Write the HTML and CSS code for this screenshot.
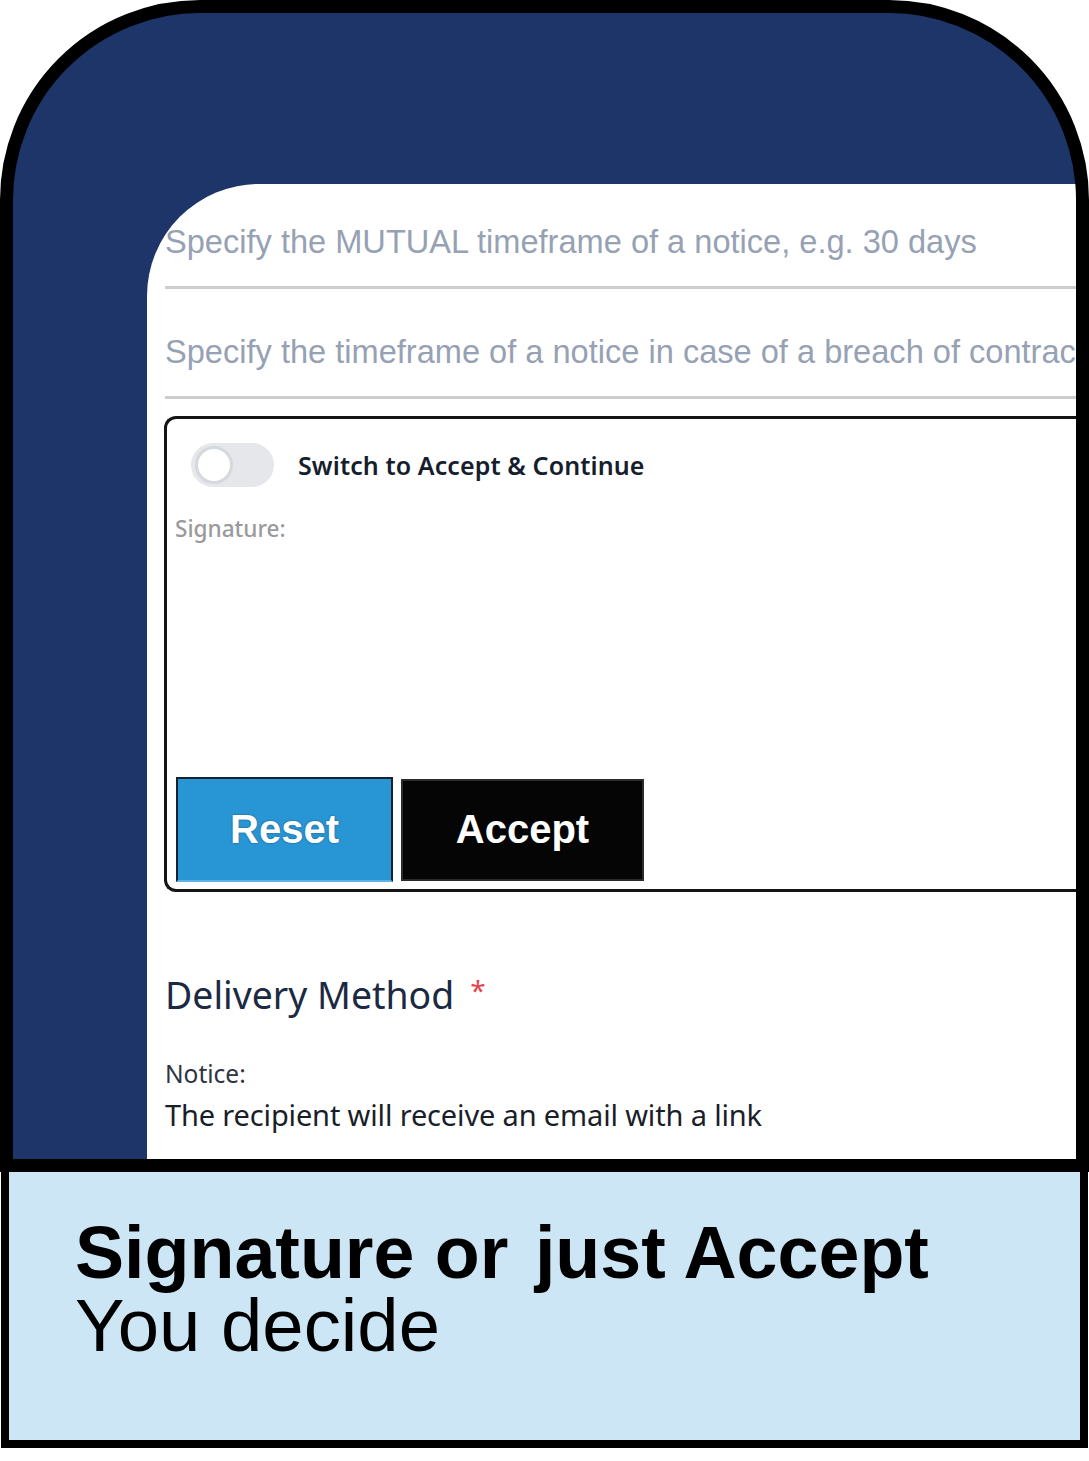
FILE: index.html
```html
<!DOCTYPE html>
<html lang="en">
<head>
<meta charset="utf-8">
<title>Signature or just Accept</title>
<link rel="stylesheet" href="styles.css">
</head>
<body>
<div class="card">
  <div class="stage">
    <div class="panel">
      <div class="field first">Specify the MUTUAL timeframe of a notice, e.g. 30 days</div>
      <div class="field">Specify the timeframe of a notice in case of a breach of contract</div>
      <div class="sigbox">
        <div class="toggle-row">
          <span class="toggle"><span class="knob"></span></span>
          <span class="toggle-label">Switch to Accept &amp; Continue</span>
        </div>
        <div class="sig-label">Signature:</div>
        <div class="buttons">
          <button class="btn btn-reset">Reset</button>
          <button class="btn btn-accept">Accept</button>
        </div>
      </div>
      <div class="delivery">Delivery Method<span class="req">*</span></div>
      <div class="notice-label">Notice:</div>
      <div class="notice-text">The recipient will receive an email with a link</div>
    </div>
  </div>
  <div class="caption">
    <div class="cap-bold">Signature or <span class="just">just Accept</span></div>
    <div class="cap-reg">You decide</div>
  </div>
</div>
</body>
</html>
```
FILE: styles.css
```css
html, body {
  margin: 0;
  padding: 0;
  background: #ffffff;
}

.card {
  width: 1089px;
  height: 1448px;
  display: flex;
  flex-direction: column;
}

.stage {
  flex: 1;
  min-height: 0;
  display: flex;
  border: 13px solid #000;
  border-radius: 200px 200px 0 0;
  overflow: hidden;
  background: #1e3569;
  padding: 171px 0 0 134px;
}

.panel {
  flex: 1;
  min-width: 0;
  background: #fff;
  border-top-left-radius: 112px;
  overflow: hidden;
  font-family: "Noto Sans", "Open Sans", sans-serif;
}

.field {
  margin-left: 18px;
  padding: 43px 0 24px;
  line-height: 40px;
  font-family: "Liberation Sans", Arial, sans-serif;
  font-size: 32.6px;
  color: #96a1b4;
  white-space: nowrap;
  overflow: hidden;
  border-bottom: 3px solid #cdcdcd;
}

.field.first {
  padding-top: 38px;
}

.sigbox {
  margin: 17px 0 0 17px;
  height: 476px;
  box-sizing: border-box;
  border: 3px solid #141414;
  border-right: none;
  border-radius: 12px 0 0 12px;
  display: flex;
  flex-direction: column;
}

.toggle-row {
  display: flex;
  align-items: center;
  gap: 24px;
  margin: 24px 0 0 24px;
  height: 44px;
}

.toggle {
  width: 83px;
  height: 44px;
  border-radius: 22px;
  background: #e5e7eb;
  display: flex;
  align-items: center;
  padding-left: 4px;
  box-sizing: border-box;
}

.knob {
  width: 38px;
  height: 38px;
  box-sizing: border-box;
  border-radius: 50%;
  background: #fff;
  border: 3px solid #d5d8dd;
}

.toggle-label {
  font-size: 25px;
  font-weight: 600;
  color: #161d2c;
  letter-spacing: 0.1px;
}

.sig-label {
  margin: 27px 0 0 8px;
  font-size: 22.6px;
  line-height: 30px;
  color: #9a9a9a;
  font-weight: 500;
}

.buttons {
  margin-top: auto;
  padding: 0 0 7px 9px;
  display: flex;
  align-items: center;
  gap: 8px;
}

.btn {
  font-family: "Liberation Sans", Arial, sans-serif;
  font-weight: bold;
  font-size: 40px;
  color: #fff;
  padding: 0;
  margin: 0;
  cursor: pointer;
  text-shadow: 0 0 2px rgba(0, 0, 0, 0.45);
}

.btn-reset {
  width: 217px;
  height: 105px;
  background: #2895d5;
  border: 2px solid #17202e;
  border-bottom-color: #5fb3e6;
}

.btn-accept {
  width: 243px;
  height: 102px;
  background: #050505;
  border: 2px solid #2b2b2b;
}

.delivery {
  margin: 79px 0 0 18px;
  font-size: 37.4px;
  line-height: 48px;
  color: #1c2943;
}

.req {
  color: #e4464c;
  font-size: 28px;
  margin-left: 16px;
  vertical-align: top;
  line-height: 38px;
}

.notice-label {
  margin: 39px 0 0 18px;
  font-size: 24.5px;
  line-height: 32px;
  color: #2d3442;
}

.notice-text {
  margin: 7px 0 0 18px;
  font-size: 29px;
  line-height: 36px;
  color: #1a1e29;
  letter-spacing: -0.15px;
}

.caption {
  height: 276px;
  margin: 0 1px;
  box-sizing: border-box;
  border: 8px solid #000;
  border-top: none;
  background: #cde6f5;
  padding: 44px 0 0 66px;
  font-family: "Liberation Sans", Arial, sans-serif;
  line-height: 73px;
  color: #000;
}

.cap-bold {
  font-size: 73.6px;
  font-weight: bold;
}

.just {
  margin-left: 6px;
}

.cap-reg {
  font-size: 74.3px;
  font-weight: normal;
}
```
